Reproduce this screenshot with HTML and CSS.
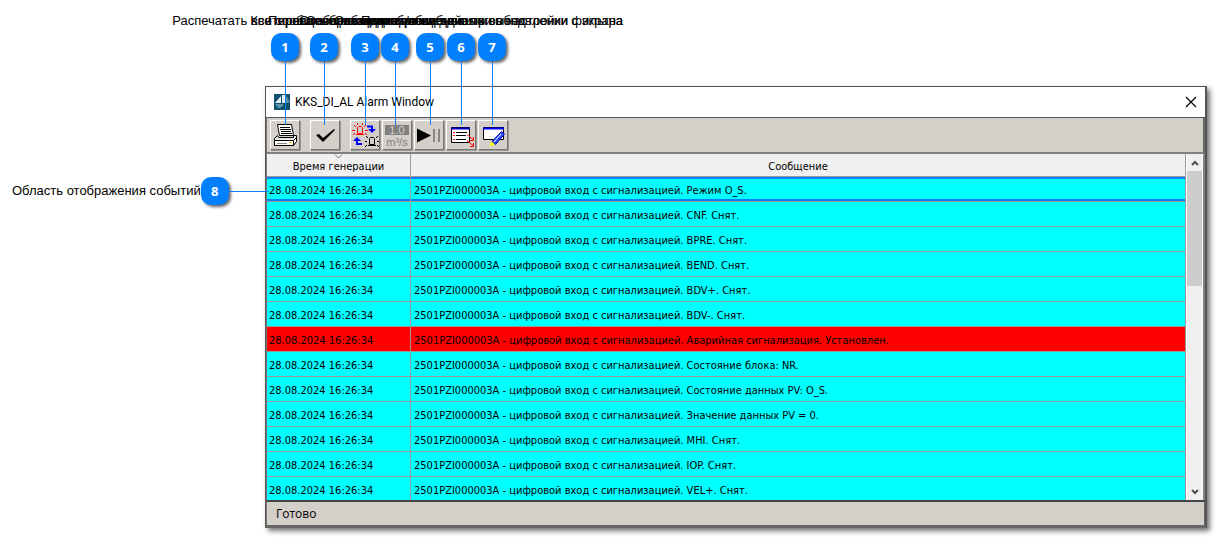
FILE: index.html
```html
<!DOCTYPE html>
<html lang="ru">
<head>
<meta charset="utf-8">
<title>KKS_DI_AL Alarm Window</title>
<link rel="stylesheet" href="styles.css">
</head>
<body>
<main class="figure">
  <section class="window">
    <header class="titlebar">
      <svg class="logo" width="16" height="16" viewBox="0 0 16 16"><rect width="16" height="16" fill="#10506e"/><path d="M1 9 7 2v7zM8 1h3v8H8z" fill="#e4eef2"/><path d="M12 2q3 2 3 7h-3z" fill="#5b91a9"/><path d="M1 10h8v2l-3 2H4z" fill="#5b91a9"/></svg>
      <h1 class="title">KKS_DI_AL Alarm Window</h1>
      <button class="close" aria-label="Закрыть"><svg width="12" height="12" viewBox="0 0 12 12"><path d="M1 1l10 10M11 1 1 11" stroke="#000" stroke-width="1.2"/></svg></button>
    </header>
    <div class="toolbar">
      <button class="tool gap" aria-label="Печать"><svg viewBox="0 0 28 27"><path d="M6.500 2.500h14l2 11h-14z" fill="#fff" stroke="#000"/><path d="M9 5.500h10M9 7.500h11M10 9.500h10M10 11.500h11" stroke="#000"/><path d="M6.500 13.500 3.500 16.500v2h19l3-3v-2h-3v2h-15z" fill="#e8e8e8" stroke="#000"/><path d="M3.500 18.500h19v5h-19zM22.500 18.500l3-3v4l-3 4" fill="#fff" stroke="#000"/><path d="M6 21.500h10" stroke="#888"/><path d="M18 20.500h3" stroke="#e8c000"/></svg></button>
      <button class="tool gap" aria-label="Квитировать"><svg viewBox="0 0 28 27"><path d="M5 13l3-1 4 4L23 7l1 1-12 12z" fill="#000"/></svg></button>
      <button class="tool" aria-label="Переключить"><svg viewBox="0 0 28 27"><g fill="none" stroke="#f00"><path d="M6.500 11.500v-6l1-1h3l1 1v6zM5 12.500h8M1 8.500h3M14 8.500h3M3 3l2 2M15 3l-2 2M2 13l2-2M16 13l-2-2M6.500 1v2M11.500 1v2"/></g><g fill="none" stroke="#000"><path d="M18.500 22.500v-6l1-1h3l1 1v6zM17 23.500h8M14 19.500h2M26 19.500h2M15 14l2 2M27 14l-2 2M14 25l2-2M28 25l-2-2"/></g><path d="M16 4.500h5v4M6 17v5h5" fill="none" stroke="#00f" stroke-width="2"/><path d="M17 7h8l-4 4zM2 19h8l-4-4z" fill="#00f"/></svg></button>
      <button class="tool" aria-label="Значение"><svg viewBox="0 0 28 27"><rect x="2" y="3" width="24" height="10" fill="#808080"/><text class="value" x="14" y="12">1.0</text><text class="unit" x="14" y="24">m³/s</text></svg></button>
      <button class="tool" aria-label="Пуск и пауза"><svg viewBox="0 0 28 27"><path d="M2 6.500v14L16 13.500z" fill="#000"/><path d="M18 7h2v13h-2zM23 7h2v13h-2z" fill="#888"/></svg></button>
      <button class="tool" aria-label="Список"><svg viewBox="0 0 28 27"><path d="M4.500 5.500h18v15h-18z" fill="#fff" stroke="#000"/><path d="M4 6.500h19" stroke="#0000c0" stroke-width="2"/><path d="M6 10.500h2M6 13.500h2M6 17.500h2" stroke="#f00"/><path d="M9 10.500h11M9 13.500h10M9 17.500h10" stroke="#000"/><path d="M20 12.500l6 5m-3 1h3.500v-3.500M20 18.500l6 5m-3 1h3.500v-3.500" fill="none" stroke="#f00"/></svg></button>
      <button class="tool" aria-label="Фильтр"><svg viewBox="0 0 28 27"><path d="M4.500 5.500h20v12h-20z" fill="#fff" stroke="#000"/><path d="M4 6.500h21" stroke="#00f" stroke-width="2"/><path d="M22.500 9.500l3 2.500-9 10.500-3.500-3z" fill="#2850ff" stroke="#0000b0"/><path d="M22 12l-7 8" stroke="#fff"/><path d="M12.500 19.500l3.500 3-5.500 2z" fill="#ff0"/></svg></button>
    </div>
    <div class="content">
      <table class="events">
        <colgroup><col class="time-col"><col></colgroup>
        <thead><tr><th><svg class="sort" width="9" height="5" viewBox="0 0 9 5"><path d="M1 0.500 4.500 4 8 0.500" fill="none" stroke="#777"/></svg>Время генерации</th><th>Сообщение</th></tr></thead>
        <tbody>
          <tr class="selected"><td>28.08.2024 16:26:34</td><td>2501PZI000003A - цифровой вход с сигнализацией. Режим O_S.</td></tr>
          <tr><td>28.08.2024 16:26:34</td><td>2501PZI000003A - цифровой вход с сигнализацией. CNF. Снят.</td></tr>
          <tr><td>28.08.2024 16:26:34</td><td>2501PZI000003A - цифровой вход с сигнализацией. BPRE. Снят.</td></tr>
          <tr><td>28.08.2024 16:26:34</td><td>2501PZI000003A - цифровой вход с сигнализацией. BEND. Снят.</td></tr>
          <tr><td>28.08.2024 16:26:34</td><td>2501PZI000003A - цифровой вход с сигнализацией. BDV+. Снят.</td></tr>
          <tr><td>28.08.2024 16:26:34</td><td>2501PZI000003A - цифровой вход с сигнализацией. BDV-. Снят.</td></tr>
          <tr class="alarm"><td>28.08.2024 16:26:34</td><td>2501PZI000003A - цифровой вход с сигнализацией. Аварийная сигнализация. Установлен.</td></tr>
          <tr><td>28.08.2024 16:26:34</td><td>2501PZI000003A - цифровой вход с сигнализацией. Состояние блока: NR.</td></tr>
          <tr><td>28.08.2024 16:26:34</td><td>2501PZI000003A - цифровой вход с сигнализацией. Состояние данных PV: O_S.</td></tr>
          <tr><td>28.08.2024 16:26:34</td><td>2501PZI000003A - цифровой вход с сигнализацией. Значение данных PV = 0.</td></tr>
          <tr><td>28.08.2024 16:26:34</td><td>2501PZI000003A - цифровой вход с сигнализацией. MHI. Снят.</td></tr>
          <tr><td>28.08.2024 16:26:34</td><td>2501PZI000003A - цифровой вход с сигнализацией. IOP. Снят.</td></tr>
          <tr class="last"><td>28.08.2024 16:26:34</td><td>2501PZI000003A - цифровой вход с сигнализацией. VEL+. Снят.</td></tr>
        </tbody>
      </table>
      <div class="scrollbar">
        <button class="arrow" aria-label="Вверх"><svg width="8" height="6" viewBox="0 0 8 6"><path d="M1 5l3-3 3 3" fill="none" stroke="#505050" stroke-width="2"/></svg></button>
        <div class="track"><div class="thumb"></div></div>
        <button class="arrow" aria-label="Вниз"><svg width="8" height="6" viewBox="0 0 8 6"><path d="M1 1l3 3 3-3" fill="none" stroke="#505050" stroke-width="2"/></svg></button>
      </div>
    </div>
    <footer class="status">Готово</footer>
  </section>

  <div class="callout c1"><span class="label">Распечатать все сообщения с экрана</span><span class="badge">1</span></div>
  <div class="callout c2"><span class="label">Квитировать сообщение</span><span class="badge">2</span></div>
  <div class="callout c3"><span class="label">Переключение вида сообщений</span><span class="badge">3</span></div>
  <div class="callout c4"><span class="label">Отображение единиц данных</span><span class="badge">4</span></div>
  <div class="callout c5"><span class="label">Остановить/возобновить вывод</span><span class="badge">5</span></div>
  <div class="callout c6"><span class="label">Сообщения, отображаемые при обновлении с экрана</span><span class="badge">6</span></div>
  <div class="callout c7"><span class="label">Подключение диалогов настройки фильтра</span><span class="badge">7</span></div>
  <div class="callout side"><span class="label">Область отображения событий</span><span class="badge">8</span></div>
</main>
</body>
</html>
```
FILE: styles.css
```css
* { box-sizing: border-box; }
body { margin: 0; background: #fff; color: #000; font-family: "Liberation Sans", Arial, sans-serif; }
button { padding: 0; border: 0; background: none; font: inherit; }
svg { display: block; }

.figure { position: relative; padding: 86px 9px 9px 265px; }

.window {
  border: 1px solid #555;
  border-width: 1px 2px 3px 1px;
  border-bottom-color: #666;
  background: #d4cfc8;
  box-shadow: 3px 3px 5px rgba(0, 0, 0, .55);
}
.titlebar {
  display: flex;
  align-items: center;
  height: 31px;
  padding: 0 8px;
  border-bottom: 1px solid #555;
  background: #fff;
}
.title {
  flex: 1;
  margin: 0 0 0 5px;
  font: 12px/18px Roboto, "Noto Sans", sans-serif;
}

.toolbar {
  display: flex;
  gap: 2px;
  height: 36px;
  padding: 2px 3px;
  border-right: 2px solid #666;
  border-left: 1px solid #777;
  border-bottom: 2px solid #808080;
}
.tool {
  width: 30px;
  height: 30px;
  border: 1px solid;
  border-color: #fff #777 #777 #fff;
  box-shadow: 1px 1px 0 #999;
}
.gap { margin-right: 8px; }
.tool svg { width: 28px; height: 27px; }
.value, .unit { font: 11px "Liberation Sans", sans-serif; text-anchor: middle; fill: #d4cfc8; }
.unit { fill: #808080; }

.content {
  display: flex;
  border-left: 1px solid #777;
  border-right: 2px solid #808080;
}
.events {
  flex: 1;
  border-collapse: separate;
  border-spacing: 0;
  table-layout: fixed;
  font: 11px/16px "DejaVu Sans Condensed", "Noto Sans", sans-serif;
}
.time-col { width: 144px; }
.events th, .events td {
  padding: 3px 2px 0;
  border-right: 1px solid #999;
  border-bottom: 1px solid #999;
  white-space: nowrap;
}
.events th { position: relative; height: 23px; padding-top: 4px; background: #f0f0f0; font-weight: normal; }
.events td { height: 25px; background: #0ff; text-align: left; }
.events td + td { padding-left: 3px; }
.sort { position: absolute; top: 0; left: 67px; }
.selected td { box-shadow: inset 0 2px #0a80ff, inset 0 -2px #0a80ff; }
.events .alarm td { background: #f00; }
.events .last td { height: 23px; padding-top: 4px; border-bottom: 0; }

.scrollbar {
  display: flex;
  flex-direction: column;
  width: 17px;
  padding: 0 1px;
  background: #fff;
}
.arrow { display: grid; place-items: center; height: 17px; background: #f0f0f0; }
.track { flex: 1; background: #f0f0f0; }
.thumb { height: 37%; background: #cdcdcd; }

.status {
  height: 25px;
  padding: 0 9px;
  border-top: 2px solid #444;
  border-right: 1px solid #666;
  border-left: 1px solid #777;
  font: 12px/24px "Open Sans", "Noto Sans", sans-serif;
}

.callout {
  position: absolute;
  top: 13px;
  display: flex;
  flex-direction: column;
  align-items: center;
  gap: 4px;
  width: 0;
  white-space: nowrap;
}
.label { font-size: 13px; line-height: 16px; }
.badge {
  width: 28px;
  height: 28px;
  border-radius: 10px;
  background: #0080ff;
  box-shadow: 2px 2px 3px rgba(0, 0, 0, .6);
  color: #fff;
  font: bold 13px/28px "Open Sans", sans-serif;
  text-align: center;
}
.callout::after {
  content: "";
  width: 1px;
  height: 64px;
  margin-top: -4px;
  background: #0a80ff;
}
.c1 { left: 285px; }
.c2 { left: 324px; }
.c3 { left: 365px; }
.c4 { left: 395px; }
.c5 { left: 430px; }
.c6 { left: 461px; }
.c7 { left: 492px; }
.side { top: 177px; left: 12px; flex-direction: row; gap: 0; width: max-content; }
.side::after { width: 40px; height: 1px; margin: 0; }
```
